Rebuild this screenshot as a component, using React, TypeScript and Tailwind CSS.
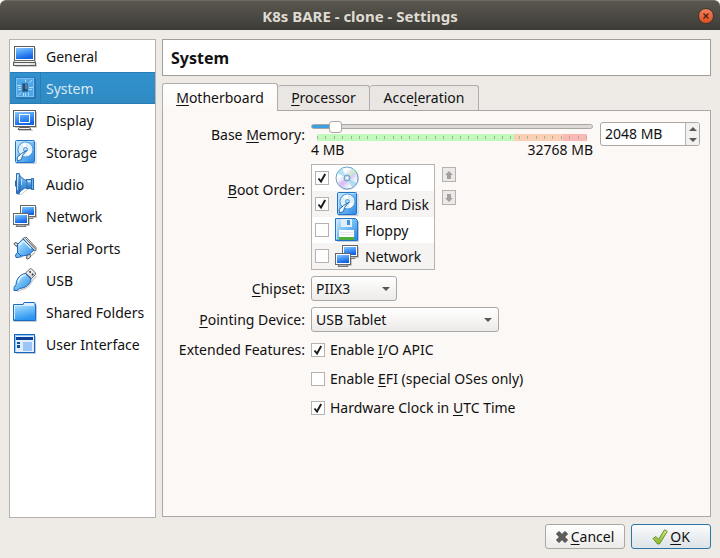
import { useState, type ReactNode } from "react";

function Defs() {
  return (
    <svg width="0" height="0" className="absolute" aria-hidden="true">
      <defs>
        <linearGradient id="screen" x1="0" y1="0" x2="0.35" y2="1">
          <stop offset="0" stopColor="#8cc8fc" />
          <stop offset="0.45" stopColor="#4a9df8" />
          <stop offset="1" stopColor="#1464e6" />
        </linearGradient>
        <linearGradient id="glass" x1="0" y1="0" x2="1" y2="1">
          <stop offset="0" stopColor="#d2edfc" />
          <stop offset="0.5" stopColor="#6fbdf5" />
          <stop offset="1" stopColor="#2a84e4" />
        </linearGradient>
        <linearGradient id="folder" x1="0" y1="0" x2="0.3" y2="1">
          <stop offset="0" stopColor="#bfe4fb" />
          <stop offset="0.5" stopColor="#6cbcf8" />
          <stop offset="1" stopColor="#2a95f2" />
        </linearGradient>
        <linearGradient id="cone" x1="0" y1="0" x2="0" y2="1">
          <stop offset="0" stopColor="#b9def6" />
          <stop offset="0.5" stopColor="#4a9ae0" />
          <stop offset="1" stopColor="#2a70c2" />
        </linearGradient>
        <linearGradient id="metal" x1="0" y1="0" x2="0" y2="1">
          <stop offset="0" stopColor="#ffffff" />
          <stop offset="1" stopColor="#cccccc" />
        </linearGradient>
        <linearGradient id="disc" x1="0" y1="0" x2="1" y2="1">
          <stop offset="0" stopColor="#bff0f2" />
          <stop offset="0.3" stopColor="#ffffff" />
          <stop offset="0.55" stopColor="#d2c8f4" />
          <stop offset="0.8" stopColor="#ffffff" />
          <stop offset="1" stopColor="#b8ecc4" />
        </linearGradient>
        <linearGradient id="tick" x1="0" y1="0" x2="0" y2="1">
          <stop offset="0" stopColor="#d3ec7a" />
          <stop offset="1" stopColor="#86b52b" />
        </linearGradient>
      </defs>
    </svg>
  );
}

function Icon({ children }: { children: ReactNode }) {
  return (
    <svg width="24" height="24" viewBox="0 0 24 24" fill="none" aria-hidden="true" className="shrink-0">
      {children}
    </svg>
  );
}

const GeneralIcon = () => (
  <Icon>
    <path d="M22.500 4v13M23.500 19v3.500H2" stroke="#c9c9c9" />
    <rect x="1.5" y="2.5" width="20" height="14" fill="#fff" stroke="#5c5c5c" />
    <rect x="3" y="4" width="17" height="11" fill="url(#screen)" />
    <path d="M1.500 16.500h20l1 2H.5z" fill="#eee" stroke="#6b6b6b" />
    <rect x=".5" y="18.5" width="22" height="3" fill="#dedede" stroke="#5c5c5c" />
    <path d="M2 20h15" stroke="#fff" />
  </Icon>
);

const SystemIcon = () => (
  <Icon>
    <path d="M22.5 3v19.500H4" stroke="#2671a8" />
    <rect x="2.500" y="1.500" width="19" height="20" fill="#4fa6e6" stroke="#2a7cc0" />
    <rect x="3.500" y="2.500" width="17" height="18" stroke="#7cc0f0" />
    <rect x="9.500" y="7.500" width="5" height="8" fill="#2a4a66" stroke="#2f76b4" />
    <rect x="12" y="8" width="2" height="5" fill="#5c7f9e" />
    <path
      d="M4 9.500h4M5 11.500h3M5 13.500h3M16 11.500h4M16 13.500h3M12.500 3.500V6M16 7.500l3-3.500M8 16.500 5 19.500M10.500 17v3M12.500 17v3M15.500 16.500v3"
      stroke="#b4dcf8"
    />
  </Icon>
);

const DisplayIcon = () => (
  <Icon>
    <path d="M23.500 4v15.500H2M6 22.500h14" stroke="#c9c9c9" />
    <rect x=".5" y="2.500" width="22" height="16" fill="#fff" stroke="#5c5c5c" />
    <rect x="2" y="4" width="19" height="13" fill="url(#screen)" />
    <path d="M6.500 6.500h10v8h-10z" stroke="#fff" />
    <path d="M5 21.500h13l-1.500-2h-10z" fill="#f2f2f2" stroke="#5c5c5c" />
  </Icon>
);

const DiskIcon = () => (
  <Icon>
    <path d="M3 23.500h20V2" stroke="#c4ccd4" />
    <rect x="2.500" y=".5" width="19" height="22" rx="1" fill="url(#glass)" stroke="#1f73c8" />
    <path d="M3.500 21.500v-20h17" stroke="#bfe2fa" opacity=".8" />
    <circle cx="12.500" cy="9.500" r="7.500" fill="#dff0fb" stroke="#4a98d8" />
    <path d="M12.500 9.500 9 4a6.500 6.500 0 0 1 4-1.200zM12.500 9.500l6.300 2.500a6.500 6.500 0 0 1-4 3.500z" fill="#fff" />
    <circle cx="12.500" cy="9.500" r="2" fill="#b5dbf6" stroke="#4a98d8" />
    <path d="m13.500 10.500-5 3-4.500 4 .5 3.500 4-1.500 1-4z" fill="#f4fafe" stroke="#1f68b8" strokeLinejoin="round" />
  </Icon>
);

const AudioIcon = () => (
  <Icon>
    <path d="M4 22.500h4l7-5.500h7" stroke="#c2ccd6" />
    <path d="M13 7.500h6v9h-6z" fill="url(#cone)" stroke="#2a6cb4" />
    <path d="M18.500 6.500h2v11h-2z" fill="#6cb4ec" stroke="#2a6cb4" />
    <path d="M6 1.500c1 3.500 4 5.500 8 7.500v6c-4 2-7 4-8 6.500z" fill="url(#cone)" stroke="#2a6cb4" strokeLinejoin="round" />
    <path d="M3.500 1.500H6c1.500 4 1.500 16 0 20H3.500z" fill="url(#cone)" stroke="#2a6cb4" strokeLinejoin="round" />
    <path d="M2.500 8.500v6" stroke="#2a6cb4" />
    <path d="M4.500 3v15M8.500 7v6M14.500 9.500h3" stroke="#d4ebfb" opacity=".8" />
  </Icon>
);

const NetworkIcon = () => (
  <Icon>
    <path d="M23.500 3v10.500H17M16.500 12v9.500H3" stroke="#c6c6c6" />
    <rect x="7.500" y="1.500" width="15" height="11" fill="#fff" stroke="#666" />
    <rect x="9" y="3" width="12" height="8" fill="url(#screen)" />
    <path d="M16 14.500h4v-1" stroke="#777" />
    <rect x=".5" y="9.500" width="15" height="11" fill="#fff" stroke="#666" />
    <rect x="2" y="11" width="12" height="8" fill="url(#screen)" />
    <path d="M3 22.500h10l-1-1.500H4z" fill="#eee" stroke="#777" />
  </Icon>
);

const SerialIcon = () => (
  <Icon>
    <path d="M6 21.500 10 20.500M14 23l2-1.500 6-5" stroke="#c4c4c4" strokeWidth="1.500" />
    <path d="M10 2.500 13 1l10 10.500v3l-2 .5z" fill="url(#metal)" stroke="#666" strokeLinejoin="round" />
    <path d="M12.500 2.500 22 12.500" stroke="#555" />
    <path d="M5 7.500 2 6.500.800 8l2.700 2.500zM14 19.500l-.5 3 1.500.5 2.500-2-.5-3z" fill="#ddd" stroke="#555" strokeLinejoin="round" />
    <path d="M4.500 8.500 10 2.800 21 14l-4.500 4-3.500 1.500-5 .5-3.500-3.500z" fill="url(#glass)" stroke="#1c66b6" strokeLinejoin="round" />
    <path d="M6 9.500 10.500 5 18 12.500" stroke="#e2f3fe" strokeWidth="1.200" />
    <path d="M4.500 16.500 2.500 19l.5 2.500h2.500L8 20z" fill="#6dbaf2" stroke="#1c66b6" strokeLinejoin="round" />
  </Icon>
);

const UsbIcon = () => (
  <Icon>
    <path d="M4 23.500 8 22c5-1 9-4 11-9l4.500-5" stroke="#d0d0d0" strokeWidth="1.500" />
    <path d="m12.500 5 4.500-4.200 1.500 0 4 4.200v1.500l-4 4z" fill="url(#metal)" stroke="#666" strokeLinejoin="round" />
    <path d="m16.500 4.500 1.200-1.200M19 7l1.200-1.200" stroke="#333" strokeWidth="1.800" />
    <path
      d="M12.500 5.500c-5 .5-9 5-9.500 11L1 19.500v3h3l2.500-2C13 20 17.500 16 18 11z"
      fill="url(#glass)"
      stroke="#1d62ae"
      strokeLinejoin="round"
    />
    <path d="M5 14.500c1-4 4-7 7.500-7.500" stroke="#e6f6ff" strokeWidth="1.500" />
  </Icon>
);

const FolderIcon = () => (
  <Icon>
    <path d="M1 21.500h22.500V5" stroke="#c2ccd6" />
    <path d="M9.500 5 11 2.500h10.500l1 2v5h-13z" fill="#d9edfb" stroke="#1c6cc0" />
    <path d="M.5 4.500h22v16H.5z" fill="url(#folder)" stroke="#1c6cc0" />
    <path d="M10.500 4.500h11" stroke="#d9edfb" />
    <path d="M1.500 19V5.500H21" stroke="#d6edfb" />
  </Icon>
);

const InterfaceIcon = () => (
  <Icon>
    <path d="M3 21.500h19.500V4" stroke="#c2ccd6" />
    <rect x="1.500" y="2.500" width="20" height="18" fill="#e3f0fc" stroke="#1467bb" />
    <path d="M2.500 19.500v-16H20.500" stroke="#8fc4f4" />
    <rect x="3" y="5" width="17" height="3" fill="#0b3f98" />
    <path d="M4 10h3v2H4zM4 13h3v3H4z" fill="#0b4fae" />
    <rect x="10" y="10" width="9" height="9" fill="#9cc6fa" />
  </Icon>
);

const OpticalIcon = () => (
  <Icon>
    <circle cx="12.500" cy="12.500" r="11" stroke="#c4c8cc" />
    <circle cx="12" cy="12" r="11" fill="url(#disc)" stroke="#6ba3c8" />
    <path d="M12 12 2.500 7.500A10.500 10.500 0 0 1 7 2.800z" fill="#a4dcf2" opacity=".8" />
    <path d="m12 12 9.500 4.500a10.500 10.500 0 0 1-4.500 4.700z" fill="#98d8f0" opacity=".8" />
    <path d="M12 12 17 2.800a10.500 10.500 0 0 1 4 3.700z" fill="#c4f2c0" opacity=".8" />
    <path d="M12 12 7 21.200a10.500 10.500 0 0 1-4-4z" fill="#dcb8f4" opacity=".75" />
    <circle cx="12" cy="12" r="3" fill="#b4d4ea" stroke="#6b9dc4" />
    <circle cx="12" cy="12" r="1.200" fill="#fff" />
  </Icon>
);

const FloppyIcon = () => (
  <Icon>
    <path d="M2 23.500h21.500V4" stroke="#c2cad2" />
    <path d="M.5.5h20l2 2v20H.5z" fill="url(#glass)" stroke="#1f73c8" />
    <rect x="6" y="1" width="11" height="8" fill="#e4eef8" />
    <rect x="12" y="2" width="3" height="5" fill="#3f94e0" />
    <rect x="4" y="12" width="15" height="10" fill="#fff" />
    <path d="M5 14.500h13M5 16.500h13" stroke="#e6e6e6" />
    <rect x="4" y="19" width="15" height="3" fill="#4fae3a" />
    <path d="M1.500 2v19" stroke="#cfeafc" />
  </Icon>
);

const CATEGORIES = [
  { name: "General", icon: GeneralIcon },
  { name: "System", icon: SystemIcon },
  { name: "Display", icon: DisplayIcon },
  { name: "Storage", icon: DiskIcon },
  { name: "Audio", icon: AudioIcon },
  { name: "Network", icon: NetworkIcon },
  { name: "Serial Ports", icon: SerialIcon },
  { name: "USB", icon: UsbIcon },
  { name: "Shared Folders", icon: FolderIcon },
  { name: "User Interface", icon: InterfaceIcon },
];

const BOOT_DEVICES = [
  { name: "Optical", icon: OpticalIcon, on: true },
  { name: "Hard Disk", icon: DiskIcon, on: true },
  { name: "Floppy", icon: FloppyIcon, on: false },
  { name: "Network", icon: NetworkIcon, on: false },
];

/** Text whose "&"-prefixed letter is underlined as the keyboard mnemonic. */
function Mnemonic({ text }: { text: string }) {
  const at = text.indexOf("&");
  if (at < 0) return <>{text}</>;
  return (
    <span className="whitespace-pre">
      {text.slice(0, at)}
      <span className="underline decoration-1 underline-offset-2 [text-decoration-skip-ink:none]">{text[at + 1]}</span>
      {text.slice(at + 2)}
    </span>
  );
}

function CheckBox({ id, on }: { id: string; on: boolean }) {
  return (
    <span className="relative size-3.5 shrink-0">
      <input
        id={id}
        type="checkbox"
        defaultChecked={on}
        className="peer block size-3.5 appearance-none border border-[#b5b2af] bg-white"
      />
      <svg
        viewBox="0 0 14 14"
        fill="none"
        aria-hidden="true"
        className="pointer-events-none absolute inset-0 hidden size-3.5 peer-checked:block"
      >
        <path d="m3.500 7.500 2.500 3 4.200-7.500" stroke="#1a1a1a" strokeWidth="1.900" />
      </svg>
    </span>
  );
}

function Feature({ id, text, on }: { id: string; text: string; on: boolean }) {
  return (
    <label htmlFor={id} className="flex h-5 items-center gap-[5px]">
      <CheckBox id={id} on={on} />
      <Mnemonic text={text} />
    </label>
  );
}

function DropDown({ id, value, className }: { id: string; value: string; className: string }) {
  return (
    <span className={`relative block ${className}`}>
      <select
        id={id}
        defaultValue={value}
        className="block h-[25px] w-full appearance-none rounded-[3px] border border-[#aaa7a4] bg-linear-to-b from-white to-[#edebe9] pl-1"
      >
        <option>{value}</option>
      </select>
      <svg width="8" height="4" viewBox="0 0 8 4" aria-hidden="true" className="pointer-events-none absolute top-[11px] right-[7px]">
        <path d="M0 0h8L4 4z" fill="#5a5856" />
      </svg>
    </span>
  );
}

function MoveButton({ label, path }: { label: string; path: string }) {
  return (
    <button type="button" aria-label={label} className="flex h-[15px] w-3.5 items-center justify-center border border-[#b4b1ae] bg-[#eceae8]">
      <svg width="10" height="10" viewBox="0 0 10 10" aria-hidden="true">
        <path d={path} fill="#a3a09d" />
      </svg>
    </button>
  );
}

export default function App() {
  const [memory, setMemory] = useState(2048);
  const tab = "border border-b-0 border-[#b0adaa] rounded-t-[3px] text-center";
  const idleTab = `${tab} h-[25px] bg-[#e9e6e3]`;

  return (
    <div className="flex min-h-screen flex-col bg-white font-['Noto_Sans',sans-serif] text-sm leading-5 text-[#111]">
      <Defs />
      <header className="flex h-[30px] items-center rounded-t-md border-t border-[#6b6860] bg-linear-to-b from-[#5a574f] to-[#3d3c37] px-1.5">
        <span className="w-4" />
        <h1 className="flex-1 text-center text-[15px] font-bold text-[#dfdbd2]">K8s BARE - clone - Settings</h1>
        <button
          type="button"
          aria-label="Close"
          className="flex size-4 items-center justify-center rounded-full border border-[#43382f] bg-linear-to-b from-[#f4805a] to-[#dd4e1e]"
        >
          <svg width="6" height="6" viewBox="0 0 6 6" aria-hidden="true">
            <path d="m.5.5 5 5m0-5-5 5" stroke="#45200f" strokeWidth="1.200" />
          </svg>
        </button>
      </header>

      <main className="flex flex-1 flex-col bg-[#eeebe7] p-[9px]">
        <div className="flex flex-1 gap-1.5">
          <nav className="w-[147px] shrink-0 border border-[#b5b2b0] bg-white">
            {CATEGORIES.map(({ name, icon: Glyph }) => {
              const selected = name === "System";
              return (
                <a
                  key={name}
                  href="#"
                  aria-current={selected ? "page" : undefined}
                  className={`flex h-8 items-center pl-[3px] ${
                    selected ? "border-y border-[#2a7db3] bg-linear-to-b from-[#3191ce] to-[#308ac2] text-[#d9e9f4]" : ""
                  }`}
                >
                  <Glyph />
                  <span
                    className={`ml-[3px] flex flex-1 items-center self-stretch border-l pt-0.5 pl-[5px] whitespace-nowrap ${
                      selected ? "border-[#2a7db3]" : "border-transparent"
                    }`}
                  >
                    {name}
                  </span>
                </a>
              );
            })}
          </nav>

          <section className="flex min-w-0 flex-1 flex-col pb-px">
            <h2 className="flex h-[37px] items-center border border-[#a09d9b] bg-white px-2 text-base font-bold">System</h2>

            <div role="tablist" className="mt-[7px] flex items-end">
              <button
                type="button"
                role="tab"
                aria-selected="true"
                className={`${tab} z-10 -mb-px h-7 w-[116px] bg-linear-to-b from-white to-[#fcf8f5]`}
              >
                <Mnemonic text="&Motherboard" />
              </button>
              <button type="button" role="tab" aria-selected="false" className={`${idleTab} w-[92px] border-l-0`}>
                <Mnemonic text="&Processor" />
              </button>
              <button type="button" role="tab" aria-selected="false" className={`${idleTab} w-[109px] border-l-0`}>
                <Mnemonic text="Acce&leration" />
              </button>
            </div>

            <div
              role="tabpanel"
              className="grid flex-1 grid-cols-[132px_1fr] content-start gap-1.5 border border-[#aaa7a4] bg-[#fcf8f5] px-2.5 pt-[9px]"
            >
              <label htmlFor="memory" className="mt-[5px] text-right">
                <Mnemonic text="Base &Memory:" />
              </label>
              <div className="flex items-start gap-[7px]">
                <div className="min-w-0 flex-1">
                  <input
                    id="memory"
                    type="range"
                    min={4}
                    max={32768}
                    value={memory}
                    onChange={(e) => setMemory(Number(e.target.value))}
                    className="block h-3 w-full appearance-none bg-transparent [&::-webkit-slider-runnable-track]:h-[5px] [&::-webkit-slider-runnable-track]:rounded-sm [&::-webkit-slider-runnable-track]:border [&::-webkit-slider-runnable-track]:border-[#a9a6a3] [&::-webkit-slider-runnable-track]:bg-[linear-gradient(to_right,#3d9fe0_7%,#dcd9d6_7%)] [&::-webkit-slider-thumb]:-mt-1 [&::-webkit-slider-thumb]:h-3 [&::-webkit-slider-thumb]:w-[13px] [&::-webkit-slider-thumb]:appearance-none [&::-webkit-slider-thumb]:rounded-[3px] [&::-webkit-slider-thumb]:border [&::-webkit-slider-thumb]:border-[#aaa7a4] [&::-webkit-slider-thumb]:bg-white"
                  />
                  <div className="mx-1.5 mt-0.5 flex h-[7px] items-center justify-between bg-[linear-gradient(to_right,#c2f9bd_73%,#fbcfb4_73%,#fbcfb4_91%,#fbb9b5_91%)]">
                    {Array.from({ length: 33 }, (_, i) => (
                      <span key={i} className="h-[3px] w-px bg-[#a6ada1]" />
                    ))}
                  </div>
                  <div className="mt-px flex justify-between leading-4">
                    <span>4 MB</span>
                    <span>32768 MB</span>
                  </div>
                </div>
                <div className="mt-0.5 flex h-6 w-[100px] overflow-hidden rounded-[3px] border border-[#aaa7a4] bg-white">
                  <input
                    aria-label="Base memory size"
                    value={`${memory} MB`}
                    readOnly
                    className="w-[84px] min-w-0 pl-1 outline-none"
                  />
                  <div className="flex w-3.5 flex-col border-l border-[#b5b2af] bg-[#f3f1ef]">
                    <button
                      type="button"
                      aria-label="Increase"
                      onClick={() => setMemory(memory + 4)}
                      className="flex flex-1 items-center justify-center"
                    >
                      <svg width="8" height="4" viewBox="0 0 8 4" aria-hidden="true">
                        <path d="M0 4h8L4 0z" fill="#5a5856" />
                      </svg>
                    </button>
                    <button
                      type="button"
                      aria-label="Decrease"
                      onClick={() => setMemory(memory - 4)}
                      className="flex flex-1 items-center justify-center"
                    >
                      <svg width="8" height="4" viewBox="0 0 8 4" aria-hidden="true">
                        <path d="M0 0h8L4 4z" fill="#5a5856" />
                      </svg>
                    </button>
                  </div>
                </div>
              </div>

              <span id="boot" className="mt-4 text-right">
                <Mnemonic text="&Boot Order:" />
              </span>
              <div className="flex items-start gap-[7px]">
                <ul aria-labelledby="boot" className="w-[124px] border border-[#b5b2af]">
                  {BOOT_DEVICES.map(({ name, icon: Glyph, on }) => (
                    <li key={name} className="bg-white even:bg-[#f5f4f3]">
                      <label htmlFor={`boot-${name}`} className="flex h-[26px] items-center gap-1.5 pl-[3px] whitespace-nowrap">
                        <CheckBox id={`boot-${name}`} on={on} />
                        <Glyph />
                        <span className="pt-0.5">{name}</span>
                      </label>
                    </li>
                  ))}
                </ul>
                <div className="flex flex-col gap-2 pt-[3px]">
                  <MoveButton label="Move up" path="M5 1l4 4H7v4H3V5H1z" />
                  <MoveButton label="Move down" path="M5 9l4-4H7V1H3v4H1z" />
                </div>
              </div>

              <label htmlFor="chipset" className="mt-[3px] text-right">
                <Mnemonic text="&Chipset:" />
              </label>
              <DropDown id="chipset" value="PIIX3" className="w-[86px]" />

              <label htmlFor="pointing" className="mt-[3px] text-right">
                <Mnemonic text="&Pointing Device:" />
              </label>
              <DropDown id="pointing" value="USB Tablet" className="w-[188px]" />

              <span className="mt-0.5 text-right whitespace-nowrap">Extended Features:</span>
              <div className="mt-0.5 flex flex-col gap-[9px]">
                <Feature id="apic" text="Enable &I/O APIC" on={true} />
                <Feature id="efi" text="Enable &EFI (special OSes only)" on={false} />
                <Feature id="utc" text="Hardware Clock in &UTC Time" on={true} />
              </div>
            </div>
          </section>
        </div>

        <footer className="mt-1.5 flex justify-end gap-1.5">
          <button
            type="button"
            className="flex h-[25px] w-20 items-center justify-center gap-[3px] rounded-[3px] border border-[#aaa7a4] bg-linear-to-b from-white to-[#edebe9]"
          >
            <svg width="12" height="12" viewBox="0 0 12 12" aria-hidden="true">
              <path d="M3 .5 6 3.500 9 .5 11.500 3 8.500 6l3 3L9 11.500l-3-3-3 3L.5 9l3-3-3-3z" fill="#5d5d5d" stroke="#444" />
            </svg>
            <Mnemonic text="&Cancel" />
          </button>
          <button
            type="button"
            className="flex h-[25px] w-20 items-center justify-center gap-0.5 rounded-[3px] border border-[#2a76a6] bg-linear-to-b from-[#fafbfc] to-[#dde3e7]"
          >
            <svg width="16" height="16" viewBox="0 0 16 16" aria-hidden="true">
              <path d="m1 9.500 3-2 2.500 3L12.500.8l2.700 1.700L7.500 15H5.500z" fill="url(#tick)" stroke="#6c8f2c" strokeLinejoin="round" />
            </svg>
            <Mnemonic text="&OK" />
          </button>
        </footer>
      </main>
    </div>
  );
}
